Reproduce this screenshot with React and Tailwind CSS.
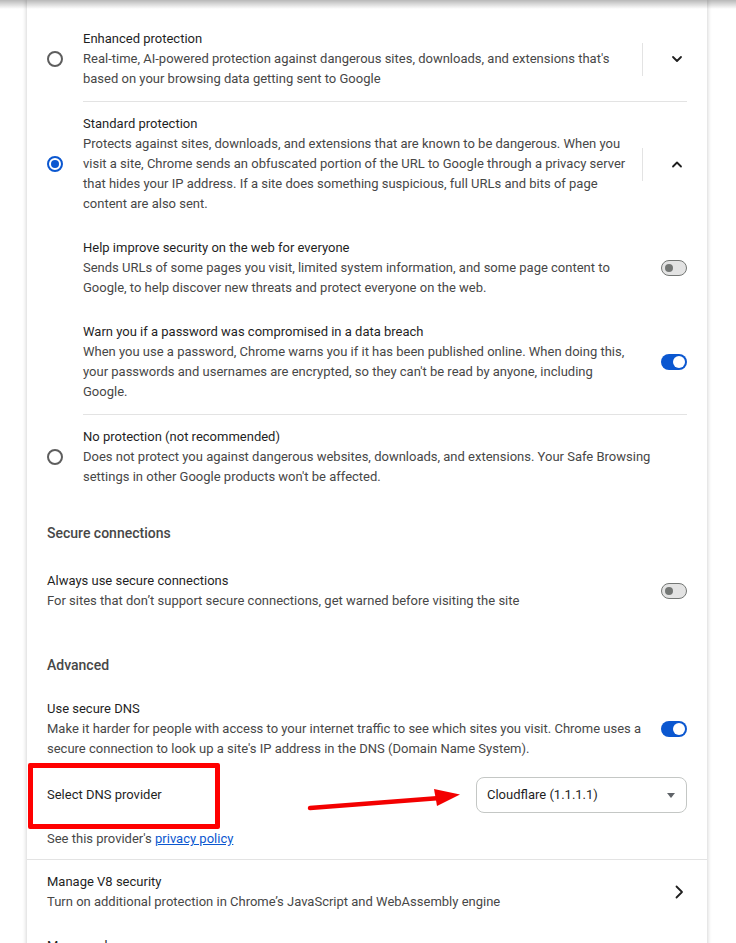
import React from "react";

const FONT = { fontFamily: "Roboto, 'Liberation Sans', sans-serif" };

function Radio({ checked }) {
  if (checked) {
    return (
      <div className="w-4 h-4 shrink-0 rounded-full border-2 border-[#0b57d0] flex items-center justify-center">
        <div className="w-[8px] h-[8px] rounded-full bg-[#0b57d0]" />
      </div>
    );
  }
  return <div className="w-4 h-4 shrink-0 rounded-full border-2 border-[#5e5e5e]" />;
}

function Toggle({ on }) {
  if (on) {
    return (
      <div className="w-[26px] h-4 shrink-0 rounded-full bg-[#0b57d0] flex items-center justify-end pr-[2px]">
        <div className="w-3 h-3 rounded-full bg-white" />
      </div>
    );
  }
  return (
    <div className="w-[26px] h-4 shrink-0 rounded-full bg-[#e3e3e3] border border-[#747775] flex items-center pl-[3px]">
      <div className="w-[8px] h-[8px] rounded-full bg-[#747775]" />
    </div>
  );
}

function Chevron({ up }) {
  return (
    <svg width="20" height="20" viewBox="0 0 20 20" className="shrink-0">
      <path
        d={up ? "M6 12.5 L10 8.5 L14 12.5" : "M6 8 L10 12 L14 8"}
        fill="none"
        stroke="#1f1f1f"
        strokeWidth="1.8"
        strokeLinecap="round"
        strokeLinejoin="round"
      />
    </svg>
  );
}

function Lines({ lines }) {
  return (
    <div className="text-[#474747]">
      {lines.map((l, i) => (
        <div key={i} className="whitespace-nowrap">{l}</div>
      ))}
    </div>
  );
}

function RadioRow({ checked, title, lines, expand, up }) {
  return (
    <div className="flex items-center px-5">
      <Radio checked={checked} />
      <div className="flex-1 flex items-center ml-5 py-3">
        <div className="flex-1">
          <div className="text-[#1f1f1f]">{title}</div>
          <Lines lines={lines} />
        </div>
        {expand && (
          <div className="flex items-center">
            <div className="w-px h-[33px] bg-[#e3e3e3]" />
            <div className="ml-6">
              <Chevron up={up} />
            </div>
          </div>
        )}
      </div>
    </div>
  );
}

function ToggleRow({ title, lines, on, indent }) {
  return (
    <div className={indent ? "flex items-center pl-[56px] pr-5 py-3" : "flex items-center px-5 py-3"}>
      <div className="flex-1">
        <div className="text-[#1f1f1f]">{title}</div>
        <Lines lines={lines} />
      </div>
      <Toggle on={on} />
    </div>
  );
}

function Sep({ full }) {
  return <div className={full ? "h-px bg-[#e3e3e3]" : "h-px bg-[#e3e3e3] ml-[56px] mr-5"} />;
}

export default function App() {
  return (
    <div className="relative h-[943px] overflow-hidden bg-white text-[13px] leading-5" style={FONT}>
      <div className="relative ml-[27px] w-[680px] bg-white shadow-[0_0_4px_1px_rgba(0,0,0,0.16)] pt-[17px] pb-10">
        <RadioRow
          title="Enhanced protection"
          lines={[
            "Real-time, AI-powered protection against dangerous sites, downloads, and extensions that's",
            "based on your browsing data getting sent to Google",
          ]}
          expand
        />
        <Sep />
        <RadioRow
          checked
          title="Standard protection"
          lines={[
            "Protects against sites, downloads, and extensions that are known to be dangerous. When you",
            "visit a site, Chrome sends an obfuscated portion of the URL to Google through a privacy server",
            "that hides your IP address. If a site does something suspicious, full URLs and bits of page",
            "content are also sent.",
          ]}
          expand
          up
        />
        <ToggleRow
          indent
          title="Help improve security on the web for everyone"
          lines={[
            "Sends URLs of some pages you visit, limited system information, and some page content to",
            "Google, to help discover new threats and protect everyone on the web.",
          ]}
        />
        <ToggleRow
          indent
          on
          title="Warn you if a password was compromised in a data breach"
          lines={[
            "When you use a password, Chrome warns you if it has been published online. When doing this,",
            "your passwords and usernames are encrypted, so they can't be read by anyone, including",
            "Google.",
          ]}
        />
        <Sep />
        <RadioRow
          title="No protection (not recommended)"
          lines={[
            "Does not protect you against dangerous websites, downloads, and extensions. Your Safe Browsing",
            "settings in other Google products won't be affected.",
          ]}
        />

        <div className="px-5 mt-6 mb-4 text-[14px] font-medium text-[#474747]">Secure connections</div>
        <ToggleRow
          title="Always use secure connections"
          lines={["For sites that don\u2019t support secure connections, get warned before visiting the site"]}
        />

        <div className="px-5 mt-8 mb-3 text-[14px] font-medium text-[#474747]">Advanced</div>
        <ToggleRow
          on
          title="Use secure DNS"
          lines={[
            "Make it harder for people with access to your internet traffic to see which sites you visit. Chrome uses a",
            "secure connection to look up a site's IP address in the DNS (Domain Name System).",
          ]}
        />

        <div className="relative px-5 pt-[6px]">
          <div className="flex items-center">
            <div className="flex-1 text-[#1f1f1f]">Select DNS provider</div>
            <div className="w-[211px] h-9 rounded-lg border border-[#c4c7c5] flex items-center justify-between pl-[10px] pr-[11px] text-[#1f1f1f]">
              <span>Cloudflare (1.1.1.1)</span>
              <svg width="8" height="5" viewBox="0 0 8 5">
                <path d="M0 0 L8 0 L4 5 Z" fill="#5f6368" />
              </svg>
            </div>
          </div>
          <div className="mt-4 pb-[10px] text-[#474747]">
            See this provider's{" "}
            <span className="text-[#0b57d0] underline">privacy policy</span>
          </div>
          <div className="absolute left-[1px] top-[-8px] w-[192px] h-[66px] border-[5px] border-[#ff0000] rounded-[2px]" />
          <svg className="absolute left-[273px] top-[10px]" width="170" height="35" viewBox="0 0 170 35">
            <path d="M10 27 L140 17" stroke="#f30000" strokeWidth="4.5" strokeLinecap="round" />
            <path d="M134 8 L160 13.5 L137 25 Z" fill="#f30000" />
          </svg>
        </div>
        <Sep full />

        <div className="flex items-center px-5 py-3">
          <div className="flex-1">
            <div className="text-[#1f1f1f]">Manage V8 security</div>
            <div className="text-[#474747]">Turn on additional protection in Chrome{"\u2019"}s JavaScript and WebAssembly engine</div>
          </div>
          <svg width="20" height="20" viewBox="0 0 20 20">
            <path d="M9.5 4.5 L15 10 L9.5 15.5" fill="none" stroke="#1f1f1f" strokeWidth="1.8" strokeLinecap="round" strokeLinejoin="round" />
          </svg>
        </div>
        <div className="flex items-center px-5 py-3">
          <div className="flex-1">
            <div className="text-[#1f1f1f]">Manage phones</div>
            <div className="text-[#474747]">Control which phones you use as security keys</div>
          </div>
        </div>
      </div>
      <div className="pointer-events-none absolute top-0 inset-x-0 h-[9px] bg-gradient-to-b from-[rgba(0,0,0,0.28)] to-transparent" />
    </div>
  );
}
